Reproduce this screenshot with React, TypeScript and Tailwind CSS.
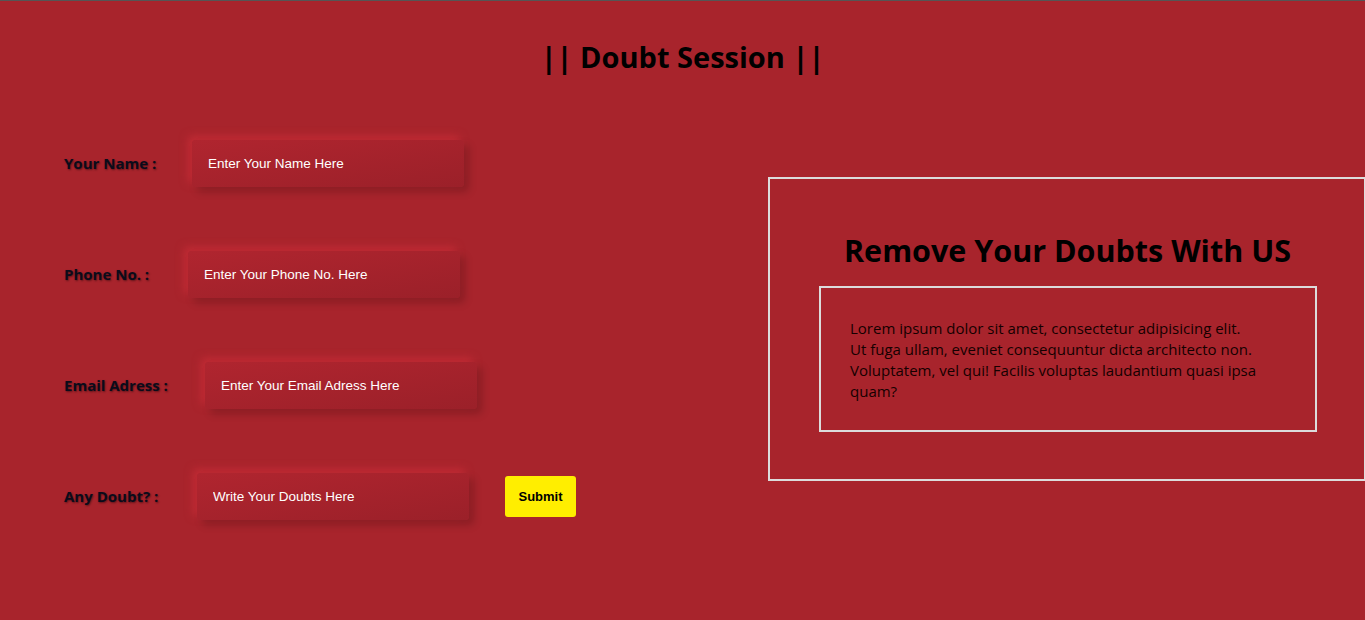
import React from "react";

const inputCls =
  "h-[47px] w-[272px] rounded-[4px] bg-gradient-to-br from-[#b0252f] to-[#9b2029] px-4 text-[13.5px] text-white placeholder:text-white outline-none shadow-[5px_5px_8px_rgba(0,0,0,0.18),-4px_-4px_8px_rgba(200,45,55,0.8)] [font-family:'Liberation_Sans',Arial,sans-serif]";

const labelCls =
  "shrink-0 text-[15px] font-bold text-[#0b0b1a] [text-shadow:1px_1px_2px_rgba(0,0,0,0.45)] [font-family:'Open_Sans','Noto_Sans',sans-serif]";

function Row({ label, width, placeholder, children }: { label: string; width: string; placeholder: string; children?: React.ReactNode }) {
  return (
    <div className="flex h-[47px] items-center">
      <label className={`${labelCls} ${width}`}>{label}</label>
      <input className={inputCls} placeholder={placeholder} />
      {children}
    </div>
  );
}

export default function App() {
  return (
    <div className="min-h-[620px] w-full border-t border-[#555] bg-[#a8242c] [font-family:'Open_Sans','Noto_Sans',sans-serif]">
      <h1 className="pt-[35px] text-center text-[29px] font-bold leading-[42px] text-black">|| Doubt Session ||</h1>
      <div className="flex">
        <div className="flex w-[768px] shrink-0 flex-col gap-[64px] pl-[64px] pt-[62px]">
          <Row label="Your Name :" width="w-[128px]" placeholder="Enter Your Name Here" />
          <Row label="Phone No. :" width="w-[124px]" placeholder="Enter Your Phone No. Here" />
          <Row label="Email Adress :" width="w-[141px]" placeholder="Enter Your Email Adress Here" />
          <Row label="Any Doubt? :" width="w-[133px]" placeholder="Write Your Doubts Here">
            <button className="ml-[36px] h-[41px] w-[71px] rounded-[3px] bg-[#ffee00] text-[13px] font-bold text-black [font-family:'Liberation_Sans',Arial,sans-serif]">
              Submit
            </button>
          </Row>
        </div>
        <div className="mt-[99px] h-[304px] w-[598px] shrink-0 border-2 border-[#dcdcdc] pl-[49px] pt-[50px]">
          <h2 className="w-[497px] text-center text-[30.5px] font-bold leading-[42px] text-black">Remove Your Doubts With US</h2>
          <div className="mt-[15px] h-[146px] w-[498px] border-2 border-[#dcdcdc] pl-[29px] pr-[20px] pt-[30px]">
            <p className="text-[15px] leading-[21px] text-[#150000]">
              Lorem ipsum dolor sit amet, consectetur adipisicing elit.
              <br />
              Ut fuga ullam, eveniet consequuntur dicta architecto non.
              <br />
              Voluptatem, vel qui! Facilis voluptas laudantium quasi ipsa quam?
            </p>
          </div>
        </div>
      </div>
    </div>
  );
}
